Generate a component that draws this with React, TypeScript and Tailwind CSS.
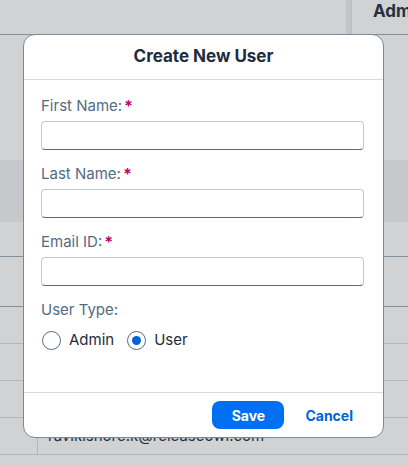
const rows = [
  { h: "h-[35px]", line: "border-[#9aa8b6]" },
  { h: "h-[50px]", line: "border-[#9aa8b6]" },
  { h: "h-[37px]", line: "border-[#d9dee3]" },
  { h: "h-[37px]", line: "border-[#d9dee3]" },
  { h: "h-[37px]", line: "border-[#d9dee3]" },
  { h: "h-[37px]", line: "border-[#d9dee3]" },
];

function Field({ label }: { label: string }) {
  return (
    <div className="flex flex-col">
      <label className="flex h-[20px] items-center text-[15px] leading-[20px] text-[#556b82]">
        {label}
        <span className="ml-[2px] text-[16px] font-bold text-[#ba066c]">*</span>
      </label>
      <input
        className="mt-[5px] h-[29px] w-full rounded-[4px] border border-[#bfcbd6] border-b-[#556b82] bg-white px-[10px] text-[14px] text-[#1d2d3e] outline-none"
        type="text"
      />
    </div>
  );
}

function Radio({ label, checked }: { label: string; checked?: boolean }) {
  return (
    <label className="flex items-center gap-[8px] text-[15px] text-[#1d2d3e]">
      <span className="flex h-[19px] w-[19px] items-center justify-center rounded-full border border-[#556b82] bg-white">
        {checked && <span className="h-[9px] w-[9px] rounded-full bg-[#0064d9]" />}
      </span>
      {label}
    </label>
  );
}

export default function App() {
  return (
    <div className="relative h-[466px] w-[408px] overflow-hidden bg-white font-['Inter',sans-serif]">
      {/* page behind the dialog */}
      <div className="flex h-full flex-col">
        <div className="flex h-[35px] shrink-0 overflow-hidden border-b border-[#9aa8b6]">
          <div className="w-[346px] shrink-0" />
          <div className="w-[6px] shrink-0 border-r border-[#dfe4e9] bg-[#e9edf1]" />
          <div className="shrink-0 whitespace-nowrap pl-[21px] text-[17px] font-bold leading-[22px] text-[#1d2d3e]">
            Administration
          </div>
        </div>
        <div className="h-[125px] shrink-0" />
        <div className="h-[62px] shrink-0 bg-[#f1f3f6]" />
        {rows.map((r, i) => (
          <div key={i} className={`flex shrink-0 border-b ${r.h} ${r.line}`}>
            <div className={i >= 1 ? "w-[38px] shrink-0 border-r border-[#d9dee3]" : "w-[38px] shrink-0"} />
            {i === 5 && (
              <div className="flex items-center whitespace-nowrap pl-[10px] text-[15px] text-[#1d2d3e]">
                ravikishore.k@releaseowl.com
              </div>
            )}
          </div>
        ))}
      </div>

      {/* dim overlay */}
      <div className="absolute inset-0 bg-[#3a3d40]/[0.23]" />

      {/* dialog */}
      <div className="absolute left-[23px] top-[34px] flex h-[404px] w-[361px] flex-col overflow-hidden rounded-[12px] border border-[#7b8896] bg-white">
        <div className="flex h-[45px] shrink-0 items-center justify-center border-b border-[#d9d9d9] text-[17px] font-bold text-[#1d2d3e]">
          Create New User
        </div>
        <div className="flex flex-1 flex-col pl-[17px] pr-[19px] pt-[16px]">
          <div className="flex flex-col gap-[14px]">
            <Field label="First Name:" />
            <Field label="Last Name:" />
            <Field label="Email ID:" />
            <div className="flex flex-col">
              <div className="flex h-[20px] items-center text-[15px] text-[#556b82]">User Type:</div>
              <div className="mt-[9px] flex items-center gap-[13px] pl-[1px]">
                <Radio label="Admin" />
                <Radio label="User" checked />
              </div>
            </div>
          </div>
        </div>
        <div className="flex h-[45px] shrink-0 items-center justify-end border-t border-[#d9d9d9] pr-[18px]">
          <button className="h-[28px] w-[72px] rounded-[8px] bg-[#0070f2] text-[14px] font-bold text-white">
            Save
          </button>
          <button className="ml-[9px] h-[28px] px-[12px] text-[14px] font-bold text-[#0064d9]">
            Cancel
          </button>
        </div>
      </div>
    </div>
  );
}
